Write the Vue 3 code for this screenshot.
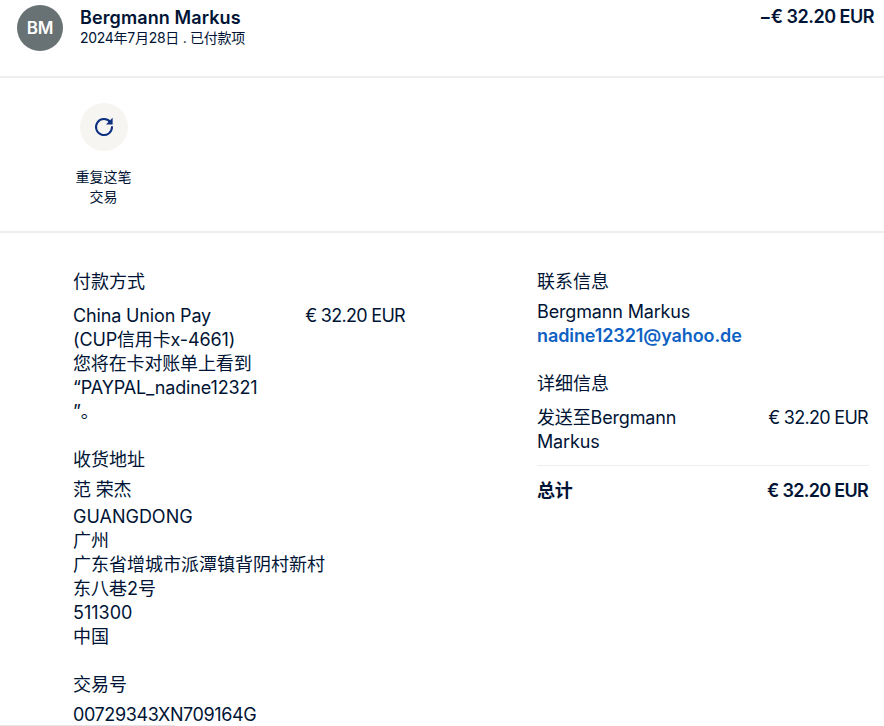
<script setup>
const address = ["GUANGDONG", "广州", "广东省增城市派潭镇背阴村新村", "东八巷2号", "511300", "中国"];
</script>

<template>
	<main class="page">
		<header class="head">
			<div class="avatar">BM</div>
			<div class="who">
				<div class="name">Bergmann Markus</div>
				<div class="sub">2024年7月28日 . 已付款项</div>
			</div>
			<div class="total">−€ 32.20 EUR</div>
		</header>

		<section class="actions">
			<div class="action">
				<div class="circle">
					<svg class="redo" width="24" height="24" viewBox="0 0 24 24" fill="none">
						<path d="M18.2 7A8 8 0 1 0 20 12" stroke="#0d2f80" stroke-width="2" stroke-linecap="round" />
						<path d="M20.6 2.8v6.6h-6.6z" fill="#0d2f80" />
					</svg>
				</div>
				<div class="action-label">重复这笔<br />交易</div>
			</div>
		</section>

		<section class="details">
			<div class="col-left">
				<h3>付款方式</h3>
				<div class="pay-row">
					<div class="pay-text">China Union Pay<br />(CUP信用卡x-4661)<br />您将在卡对账单上看到<br />“PAYPAL_nadine12321<br />”。</div>
					<div class="amount">€ 32.20 EUR</div>
				</div>

				<h3 class="ship-title">收货地址</h3>
				<div class="person">范 荣杰</div>
				<div v-for="line in address" :key="line" class="line">{{ line }}</div>

				<h3 class="tx-title">交易号</h3>
				<div class="tx-id">00729343XN709164G</div>
			</div>

			<div class="col-right">
				<h3>联系信息</h3>
				<div class="contact">Bergmann Markus</div>
				<a class="mail">nadine12321@yahoo.de</a>

				<h3 class="info-title">详细信息</h3>
				<div class="info-row">
					<div class="info-name">发送至Bergmann Markus</div>
					<div class="amount">€ 32.20 EUR</div>
				</div>
				<div class="sum-row">
					<div>总计</div>
					<div class="amount">€ 32.20 EUR</div>
				</div>
			</div>
		</section>
		<div class="edge"></div>
	</main>
</template>

<style scoped>
.page {
	position: relative;
	width: 884px;
	height: 726px;
	overflow: hidden;
	background: #fff;
	color: #001435;
	font-family: Inter, "Noto Sans CJK SC", sans-serif;
	font-size: 18px;
	letter-spacing: -0.15px;
	line-height: 24px;
}

.head {
	display: flex;
	height: 76px;
	padding: 5px 10px 0 17px;
	box-sizing: border-box;
}

.avatar {
	width: 46px;
	height: 46px;
	border-radius: 50%;
	background: #687173;
	color: #fff;
	font-size: 17px;
	font-weight: 600;
	line-height: 46px;
	text-align: center;
}

.who {
	margin-left: 17px;
	flex: 1;
}

.name {
	font-weight: 600;
	letter-spacing: 0.1px;
	line-height: 24px;
	padding-top: 1px;
}

.sub {
	font-size: 14px;
	letter-spacing: -0.28px;
	line-height: 18px;
	margin-top: -1px;
}

.total {
	font-weight: 600;
	letter-spacing: -0.5px;
	line-height: 24px;
}

.actions {
	height: 128px;
	border-top: 2px solid #eeeeee;
	border-bottom: 2px solid #eeeeee;
	padding-top: 25px;
	padding-left: 63px;
}

.action {
	width: 82px;
	text-align: center;
}

.circle {
	width: 48px;
	height: 48px;
	margin: 0 auto;
	border-radius: 50%;
	background: #f6f5f1;
	display: flex;
	align-items: center;
	justify-content: center;
}

.redo {
	margin-top: -1px;
}

.action-label {
	font-size: 14px;
	letter-spacing: 0;
	line-height: 20px;
	margin-top: 16px;
	margin-left: -1px;
}

.details {
	display: flex;
	padding-left: 73px;
	padding-top: 37px;
}

h3 {
	margin: 0;
	font-size: 18px;
	font-weight: 400;
	letter-spacing: 0;
	line-height: 24px;
}

.col-left {
	width: 333px;
}

.pay-row {
	display: flex;
	justify-content: space-between;
	margin-top: 10px;
}

.pay-text {
	width: 200px;
}

.amount {
	letter-spacing: -0.7px;
	margin-right: 1px;
}

.ship-title {
	margin-top: 24px;
}

.person {
	margin-top: 4px;
	margin-bottom: 2px;
	line-height: 27px;
}

.line {
	letter-spacing: 0;
}

.tx-title {
	margin-top: 24px;
}

.tx-id {
	margin-top: 6px;
	letter-spacing: -0.4px;
}

.col-right {
	width: 332px;
	margin-left: 131px;
}

.contact {
	margin-top: 6px;
}

.mail {
	display: block;
	color: #0f62c4;
	font-weight: 600;
	letter-spacing: -0.1px;
}

.info-title {
	margin-top: 24px;
}

.info-row {
	display: flex;
	justify-content: space-between;
	margin-top: 10px;
	padding-bottom: 11px;
	border-bottom: 1px solid #eeeeee;
}

.info-name {
	width: 170px;
}

.sum-row {
	display: flex;
	justify-content: space-between;
	font-weight: 600;
	margin-top: 13px;
}

.edge {
	position: absolute;
	left: 0;
	bottom: 0;
	width: 175px;
	height: 1px;
	background: #e4e4e4;
}
</style>
